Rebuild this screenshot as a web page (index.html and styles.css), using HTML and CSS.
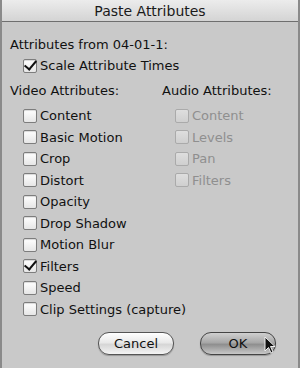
FILE: index.html
```html
<!DOCTYPE html>
<html>
<head>
<meta charset="utf-8">
<link rel="stylesheet" href="styles.css">
</head>
<body>
<div class="window">
  <div class="titlebar">Paste Attributes</div>
  <div class="content">
    <div class="label">Attributes from 04-01-1:</div>
    <div class="item indent"><span class="cb checked"></span>Scale Attribute Times</div>
    <div class="columns">
      <div class="col video">
        <div class="label head">Video Attributes:</div>
        <div class="item"><span class="cb"></span>Content</div>
        <div class="item"><span class="cb"></span>Basic Motion</div>
        <div class="item"><span class="cb"></span>Crop</div>
        <div class="item"><span class="cb"></span>Distort</div>
        <div class="item"><span class="cb"></span>Opacity</div>
        <div class="item"><span class="cb"></span>Drop Shadow</div>
        <div class="item"><span class="cb"></span>Motion Blur</div>
        <div class="item"><span class="cb checked"></span>Filters</div>
        <div class="item"><span class="cb"></span>Speed</div>
        <div class="item"><span class="cb"></span>Clip Settings (capture)</div>
      </div>
      <div class="col audio">
        <div class="label head">Audio Attributes:</div>
        <div class="item disabled"><span class="cb"></span>Content</div>
        <div class="item disabled"><span class="cb"></span>Levels</div>
        <div class="item disabled"><span class="cb"></span>Pan</div>
        <div class="item disabled"><span class="cb"></span>Filters</div>
      </div>
    </div>
    <div class="buttons">
      <div class="btn">Cancel</div>
      <div class="btn default">OK
        <svg class="cursor" width="12" height="18" viewBox="0 0 12 18"><path d="M1 1 L1 15 L4.5 11.5 L7 17 L9 16 L6.5 10.5 L11 10.5 Z" fill="#111" stroke="#eee" stroke-width="1"/></svg>
      </div>
    </div>
  </div>
</div>
</body>
</html>
```
FILE: styles.css
```css
html, body {
  margin: 0;
  padding: 0;
  background: #c9c9c9;
}
.window {
  width: 300px;
  height: 368px;
  box-sizing: border-box;
  border-left: 2px solid #8a8a8a;
  border-right: 2px solid #8a8a8a;
  background: #c9c9c9;
  font-family: "DejaVu Sans", "Liberation Sans", sans-serif;
  font-size: 13px;
  color: #111;
  display: flex;
  flex-direction: column;
}
.titlebar {
  height: 22px;
  box-sizing: border-box;
  border-bottom: 1px solid #6f6f6f;
  background: linear-gradient(#ececec, #d4d4d4);
  text-align: center;
  line-height: 22px;
  font-size: 14px;
  color: #1a1a1a;
}
.content {
  padding: 12px 0 0 8px;
  flex: 1;
  display: flex;
  flex-direction: column;
}
.label {
  height: 21px;
  line-height: 21px;
  white-space: nowrap;
}
.item {
  height: 21.5px;
  line-height: 21.5px;
  display: flex;
  align-items: center;
  padding-left: 13px;
  white-space: nowrap;
}
.indent {
  margin-bottom: 3px;
}
.columns {
  display: grid;
  grid-template-columns: 152px 1fr;
}
.head {
  margin-bottom: 4.5px;
}
.cb {
  width: 12px;
  height: 12px;
  border: 1px solid #7d7d7d;
  border-radius: 2px;
  background: linear-gradient(#ffffff, #e6e6e6);
  margin-right: 3px;
  position: relative;
  flex: none;
  box-shadow: inset 0 1px 1px rgba(0,0,0,0.15);
}
.cb.checked::after {
  content: "";
  position: absolute;
  left: 3px;
  top: -2px;
  width: 5px;
  height: 10px;
  border-right: 2.5px solid #111;
  border-bottom: 2.5px solid #111;
  transform: rotate(40deg);
}
.disabled {
  color: #8f8f8f;
}
.disabled .cb {
  border-color: #aaa;
  background: linear-gradient(#dedede, #cfcfcf);
  box-shadow: none;
}
.buttons {
  margin-top: auto;
  margin-bottom: 13px;
  display: flex;
  justify-content: flex-end;
  gap: 26px;
  padding-right: 22px;
}
.btn {
  width: 74px;
  height: 21px;
  border: 1px solid #555;
  border-radius: 11px;
  background: linear-gradient(#ffffff 0%, #e9e9e9 45%, #d6d6d6 55%, #f4f4f4 100%);
  text-align: center;
  line-height: 21px;
  font-size: 13px;
  position: relative;
  box-shadow: 0 1px 1px rgba(0,0,0,0.25);
}
.btn.default {
  background: linear-gradient(#d0d0d0 0%, #a8a8a8 45%, #8f8f8f 55%, #c8c8c8 100%);
  border-color: #444;
}
.cursor {
  position: absolute;
  left: 63px;
  top: 3px;
}
```
